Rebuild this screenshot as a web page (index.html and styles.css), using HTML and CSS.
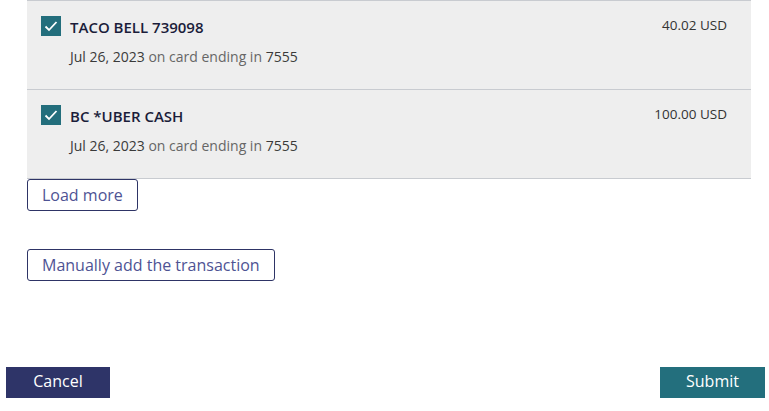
FILE: index.html
```html
<!DOCTYPE html>
<html lang="en">
<head>
  <meta charset="UTF-8" />
  <meta name="viewport" content="width=device-width, initial-scale=1.0" />
  <title>Select transactions</title>
  <link rel="stylesheet" href="styles.css">
</head>
<body>
  <div class="page">
    <div class="txn-list">
      <div class="txn">
        <span class="check">
          <svg width="20" height="20" viewBox="0 0 20 20"><path d="M4.5 10.5 L8 14 L15.5 6" fill="none" stroke="#fff" stroke-width="1.8"/></svg>
        </span>
        <div class="txn-info">
          <div class="txn-name">TACO BELL 739098</div>
          <div class="txn-meta"><span class="dark">Jul 26, 2023</span> on card ending in <span class="dark">7555</span></div>
        </div>
        <div class="txn-amount">40.02 USD</div>
      </div>
      <div class="txn">
        <span class="check">
          <svg width="20" height="20" viewBox="0 0 20 20"><path d="M4.5 10.5 L8 14 L15.5 6" fill="none" stroke="#fff" stroke-width="1.8"/></svg>
        </span>
        <div class="txn-info">
          <div class="txn-name">BC *UBER CASH</div>
          <div class="txn-meta"><span class="dark">Jul 26, 2023</span> on card ending in <span class="dark">7555</span></div>
        </div>
        <div class="txn-amount">100.00 USD</div>
      </div>
    </div>

    <button class="btn-outline load">Load more</button>
    <button class="btn-outline manual">Manually add the transaction</button>
  </div>

  <div class="actions">
    <button class="btn cancel">Cancel</button>
    <button class="btn submit">Submit</button>
  </div>
</body>
</html>
```

FILE: styles.css
```css
body {
  font-family: "Open Sans", Arial, sans-serif;
  margin: 0;
  background-color: #ffffff;
  color: #222;
  height: 411px;
  position: relative;
}
.page {
  padding: 0 18px 0 27px;
}
.txn-list {
  background-color: #eeeeee;
  border-top: 1px solid #c8cbd0;
}
.txn {
  display: flex;
  align-items: flex-start;
  height: 88px;
  padding: 0 24px 0 14px;
  border-bottom: 1px solid #c8cbd0;
}
.check {
  width: 20px;
  height: 20px;
  margin-top: 15px;
  background-color: #236e7c;
  flex: none;
}
.check svg {
  display: block;
}
.txn-info {
  flex: 1;
  margin-left: 9px;
}
.txn-name {
  margin-top: 15px;
  font-size: 15px;
  font-weight: 600;
  line-height: 22px;
  color: #1b1d3a;
}
.txn-meta {
  margin-top: 9px;
  font-size: 14px;
  line-height: 20px;
  color: #666666;
}
.txn-meta .dark {
  color: #3a3a3a;
}
.txn-amount {
  margin-top: 14px;
  font-size: 13.5px;
  line-height: 20px;
  color: #333333;
}
.btn-outline {
  display: block;
  font-family: "Open Sans", Arial, sans-serif;
  font-size: 16px;
  color: #4e5394;
  background-color: #ffffff;
  border: 1px solid #2e3466;
  border-radius: 3px;
  height: 32px;
  padding: 0 14px;
  cursor: pointer;
}
.manual {
  margin-top: 38px;
}
.actions {
  position: absolute;
  left: 6px;
  right: 4px;
  top: 367px;
  display: flex;
  justify-content: space-between;
}
.btn {
  font-family: "Open Sans", Arial, sans-serif;
  font-size: 16px;
  color: #ffffff;
  border: none;
  height: 31px;
  width: 105px;
  padding: 0 0 4px;
  cursor: pointer;
}
.cancel {
  background-color: #2e3468;
  width: 104px;
}
.submit {
  background-color: #236f7d;
}
```
